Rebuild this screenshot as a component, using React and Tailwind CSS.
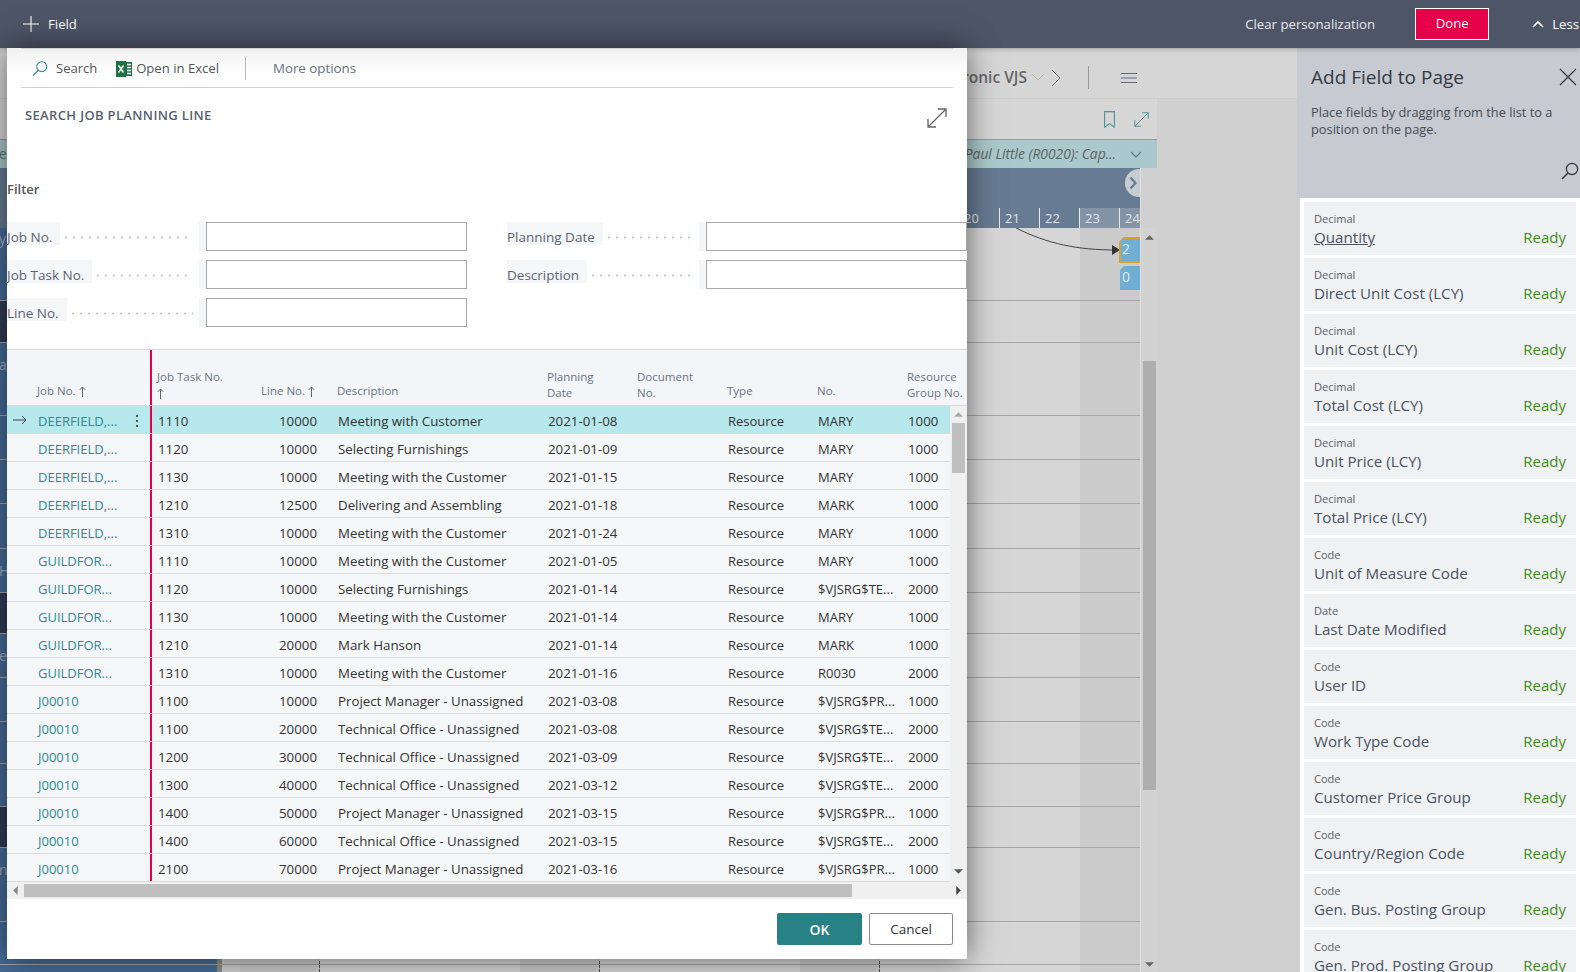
import React from 'react';

const rowsBg = [
  [73, 'blue', 'y'], [42, 'dark', ''], [73, 'blue', 'a'], [44, 'blue', ''], [44, 'blue', ''],
  [45, 'blue', ''], [44, 'blue', 'H\''], [41, 'dark', ''], [44, 'blue', 'e'], [44, 'blue', ''],
  [42, 'blue', ''], [43, 'blue', ''], [41, 'dark', ''], [74, 'blue', 'na'], [43, 'blue', ''], [12, 'blue', ''],
];

const PM = 'Project Manager - Unassigned';
const TO = 'Technical Office - Unassigned';
const MC = 'Meeting with the Customer';
const SF = 'Selecting Furnishings';
const TE = '$VJSRG$TE...';
const PR = '$VJSRG$PR...';
const D = 'DEERFIELD,...';
const G = 'GUILDFOR...';
const J = 'J00010';
const data = [
  [D, '1110', '10000', 'Meeting with Customer', '2021-01-08', 'MARY', '1000'],
  [D, '1120', '10000', SF, '2021-01-09', 'MARY', '1000'],
  [D, '1130', '10000', MC, '2021-01-15', 'MARY', '1000'],
  [D, '1210', '12500', 'Delivering and Assembling', '2021-01-18', 'MARK', '1000'],
  [D, '1310', '10000', MC, '2021-01-24', 'MARY', '1000'],
  [G, '1110', '10000', MC, '2021-01-05', 'MARY', '1000'],
  [G, '1120', '10000', SF, '2021-01-14', TE, '2000'],
  [G, '1130', '10000', MC, '2021-01-14', 'MARY', '1000'],
  [G, '1210', '20000', 'Mark Hanson', '2021-01-14', 'MARK', '1000'],
  [G, '1310', '10000', MC, '2021-01-16', 'R0030', '2000'],
  [J, '1100', '10000', PM, '2021-03-08', PR, '1000'],
  [J, '1100', '20000', TO, '2021-03-08', TE, '2000'],
  [J, '1200', '30000', TO, '2021-03-09', TE, '2000'],
  [J, '1300', '40000', TO, '2021-03-12', TE, '2000'],
  [J, '1400', '50000', PM, '2021-03-15', PR, '1000'],
  [J, '1400', '60000', TO, '2021-03-15', TE, '2000'],
  [J, '2100', '70000', PM, '2021-03-16', PR, '1000'],
];

const fields = [
  ['Decimal', 'Quantity'], ['Decimal', 'Direct Unit Cost (LCY)'], ['Decimal', 'Unit Cost (LCY)'],
  ['Decimal', 'Total Cost (LCY)'], ['Decimal', 'Unit Price (LCY)'], ['Decimal', 'Total Price (LCY)'],
  ['Code', 'Unit of Measure Code'], ['Date', 'Last Date Modified'], ['Code', 'User ID'],
  ['Code', 'Work Type Code'], ['Code', 'Customer Price Group'], ['Code', 'Country/Region Code'],
  ['Code', 'Gen. Bus. Posting Group'], ['Code', 'Gen. Prod. Posting Group'],
];

const GRID = 'grid grid-cols-[30px_113px_2px_100px_65px_225px_90px_90px_90px_90px_48px]';

function Expand({ className, color = 'currentColor', w = 1.4 }) {
  return (
    <svg viewBox="0 0 20 20" className={className} fill="none" stroke={color} strokeWidth={w}>
      <path d="M1 19 19 1M11 1h8v8M1 11v8h8" />
    </svg>
  );
}

function SearchIcon({ className, color }) {
  return (
    <svg viewBox="0 0 18 18" className={className} fill="none" stroke={color} strokeWidth="1.2">
      <circle cx="11" cy="7" r="5.6" />
      <path d="M7 11 1 17" strokeWidth="1.4" />
    </svg>
  );
}

function Tri({ dir, className }) {
  const p = { up: '0,6 4,2 8,6', down: '0,2 8,2 4,6', left: '6,0 6,8 2,4', right: '2,0 2,8 6,4' }[dir];
  return (
    <svg viewBox="0 0 8 8" className={className} fill="currentColor">
      <polygon points={p} />
    </svg>
  );
}

function Up({ className = '' }) {
  return (
    <svg viewBox="0 0 7 11" className={`inline-block w-[7px] h-[11px] ${className}`} fill="none" stroke="#5f6773" strokeWidth="1">
      <path d="M3.5 11V1M.8 3.8 3.5 1l2.7 2.8" />
    </svg>
  );
}

function Field({ label }) {
  return (
    <div className="flex h-[29px] w-[460px]">
      <div className="flex w-[192px] h-[23px] items-center">
        <span className="bg-[#f5f6f8] h-[23px] pr-[8px] leading-[31px] text-[13.5px] text-[#5c6470] whitespace-nowrap">{label}</span>
        <span className="flex-1 ml-[2px] mr-[6px] mt-[8px] h-[3px] bg-[radial-gradient(circle,#c4c8cc_1px,transparent_1.2px)] bg-[length:8px_3px] bg-repeat-x" />
      </div>
      <div className="w-[7px] bg-[#f5f6f8] h-full" />
      <div className="flex-1 border border-[#a8a8a8] bg-white" />
    </div>
  );
}

function Timeline() {
  return (
    <div className="flex-1 flex">
      <div className="w-[18px] bg-[#d0d0d0]" />
      <div className="w-[80px] bg-[#cbcbcb] border-r border-dashed border-[#555]" />
      <div className="w-[200px] bg-[#d6d6d6]" />
      <div className="w-[80px] bg-[#cbcbcb] border-r border-dashed border-[#555]" />
      <div className="w-[200px] bg-[#d6d6d6]" />
      <div className="w-[80px] bg-[#cbcbcb] border-r border-dashed border-[#555]" />
      <div className="w-[200px] bg-[#d6d6d6]" />
      <div className="w-[60px] bg-[#cbcbcb]" />
    </div>
  );
}

export default function App() {
  return (
    <div className="relative w-[1580px] h-[972px] overflow-hidden flex flex-col bg-[#d0d0d0] font-['Open_Sans',sans-serif] text-[13px] text-[#333]">
      {/* top bar */}
      <div className="relative z-10 h-[48px] shrink-0 bg-[#4d5567] text-white flex items-center shadow-[0_1px_5px_rgba(0,0,0,0.25)]">
        <svg viewBox="0 0 16 16" className="w-[16px] h-[16px] ml-[23px]" fill="none" stroke="white" strokeWidth="1.1">
          <path d="M8 0v16M0 8h16" />
        </svg>
        <span className="ml-[9px] text-[13.2px] leading-[50px]">Field</span>
        <span className="ml-auto text-[13.2px] leading-[50px] text-[#e6e8ec]">Clear personalization</span>
        <button className="ml-[40px] w-[74px] h-[32px] bg-[#e4004b] border border-white text-[13.2px] text-white">Done</button>
        <svg viewBox="0 0 12 8" className="w-[12px] h-[8px] ml-[43px]" fill="none" stroke="white" strokeWidth="1.6">
          <path d="M1 7l5-5 5 5" />
        </svg>
        <span className="ml-[8px] mr-[1px] text-[13.2px] leading-[50px]">Less</span>
      </div>

      <div className="flex-1 flex min-h-0">
        {/* background page */}
        <div className="w-[1297px] flex flex-col">
          <div className="h-[51px] shrink-0 bg-[#d6d6d6] border-b border-[#cdcdcd] flex items-center justify-end pr-[160px] pt-[9px] text-[#666]">
            <span className="text-[15.5px] font-semibold">ronic VJS</span>
            <svg viewBox="0 0 12 7" className="w-[12px] h-[7px] ml-[5px]" fill="none" stroke="#b4b4b4" strokeWidth="1"><path d="M0 0l6 6 6-6" /></svg>
            <svg viewBox="0 0 10 18" className="w-[10px] h-[18px] ml-[7px]" fill="none" stroke="#777" strokeWidth="1"><path d="M1 1l8 8-8 8" /></svg>
            <div className="w-px h-[23px] bg-[#999] ml-[27px]" />
            <svg viewBox="0 0 16 10" className="w-[16px] h-[10px] ml-[32px]" fill="none" stroke="#5f6b7a" strokeWidth="1"><path d="M0 .5h16M0 5h16M0 9.5h16" /></svg>
          </div>
          <div className="flex-1 flex min-h-0">
            <div className="w-[1157px] flex flex-col">
              <div className="h-[40px] shrink-0 bg-[#d6d6d6] flex items-center justify-end pr-[8px]">
                <svg viewBox="0 0 11 17" className="w-[11px] h-[17px] mr-[19px]" fill="none" stroke="#4f9298" strokeWidth="1.1"><path d="M.6.6h9.8v15.6L5.5 12.6.6 16.2z" /></svg>
                <Expand className="w-[15px] h-[15px]" color="#4f9298" w={1.3} />
              </div>
              <div className="h-[29px] shrink-0 bg-[#abc9cc] border-t border-[#999] flex items-center justify-end pr-[15px] italic text-[#5a6466] text-[13.8px]">
                <span className="mr-auto -ml-[1px] not-italic text-[#5f7476]">e</span>
                <span>Paul Little (R0020): Cap...</span>
                <svg viewBox="0 0 12 7" className="w-[12px] h-[7px] ml-[14px]" fill="none" stroke="#4f8388" strokeWidth="1.2"><path d="M1 1l5 5 5-5" /></svg>
              </div>
              <div className="flex-1 flex min-h-0">
                <div className="flex-1 flex flex-col min-w-0">
                  <div className="h-[60px] shrink-0 bg-[#677b92] flex flex-col">
                    <div className="h-[40px] flex justify-end pt-[1px]">
                      <div className="w-[15px] h-[28px] bg-[#c7ccd2] rounded-l-full flex items-center justify-center text-[#677b92]">
                        <svg viewBox="0 0 8 14" className="w-[8px] h-[14px]" fill="none" stroke="currentColor" strokeWidth="2.2"><path d="M1.5 1.5 6.5 7l-5 5.5" /></svg>
                      </div>
                    </div>
                    <div className="h-[20px] flex justify-end text-[13px] leading-[20px] text-[#e0e4e8] overflow-hidden">
                      {['20', '21', '22', '23', '24'].map((d, i) => (
                        <div key={d} className={`${i === 4 ? 'w-[21px]' : 'w-[40px]'} ${i > 2 ? 'bg-[#8494a6]' : ''} ${i > 0 ? 'border-l border-[#e8ebee]' : ''} pl-[5px] whitespace-nowrap`}>{d}</div>
                      ))}
                    </div>
                  </div>
                  <div className="flex-1 relative overflow-hidden flex flex-col">
                    {rowsBg.map(([h, kind, txt], i) => (
                      <div key={i} style={{ height: h }} className="shrink-0 flex border-b border-[#a6a6a6]">
                        <div className={`w-[217px] overflow-hidden ${kind === 'dark' ? 'bg-[#303c56]' : 'bg-[#466b98]'} text-[#9fb0c4] text-[14px]`}>
                          {txt && <span className={`block -ml-[1px] ${i === 0 ? 'mt-0' : 'mt-[11px]'}`}>{txt}</span>}
                        </div>
                        <div className="w-[5px] bg-[#8f8f8f]" />
                        <Timeline />
                      </div>
                    ))}
                    <svg viewBox="0 0 120 30" className="absolute left-[1008px] top-0 w-[120px] h-[30px]" fill="none">
                      <path d="M8 0C40 16 70 22 108 22" stroke="#444" strokeWidth="1" />
                      <path d="M104 17l8 5-8 5z" fill="#333" />
                    </svg>
                    <div className="absolute left-[1119px] top-[9px] w-[21px] h-[26px] bg-[#6fafd4] border-2 border-r-0 border-[#d9a035] [clip-path:polygon(5px_0,100%_0,100%_100%,0_100%,0_5px)] text-[#dfeaf2] text-[14px] leading-[20px] pl-[1px]">2</div>
                    <div className="absolute left-[1120px] top-[38px] w-[20px] h-[24px] bg-[#6fafd4] [clip-path:polygon(4px_0,100%_0,100%_100%,0_100%,0_4px)] text-[#dfeaf2] text-[14px] leading-[22px] pl-[2px]">0</div>
                  </div>
                </div>
                <div className="w-[17px] shrink-0 flex flex-col items-center bg-[#d2d2d2] border-l border-[#e0e0e0]">
                  <div className="h-[60px] w-full bg-[#d0d0d0]" />
                  <Tri dir="up" className="w-[9px] h-[9px] mt-[5px] text-[#666]" />
                  <div className="w-[13px] h-[429px] bg-[#aeaeae] mt-[119px]" />
                  <Tri dir="down" className="w-[9px] h-[9px] mt-auto mb-[3px] text-[#666]" />
                </div>
              </div>
            </div>
            <div className="flex-1 bg-[#d0d0d0]" />
          </div>
        </div>

        {/* right panel */}
        <div className="w-[283px] flex flex-col bg-[#cfcfcf]">
          <div className="h-[150px] shrink-0 bg-[#c7cad0] pl-[14px] relative">
            <div className="pt-[15px] text-[19px] leading-[28px] text-[#333a45]">Add Field to Page</div>
            <div className="mt-[13px] w-[264px] text-[12.8px] leading-[17px] text-[#444b56]">Place fields by dragging from the list to a position on the page.</div>
            <svg viewBox="0 0 18 18" className="absolute right-[3px] top-[20px] w-[18px] h-[18px]" fill="none" stroke="#333" strokeWidth="1.1"><path d="M1 1l16 16M17 1 1 17" /></svg>
            <SearchIcon className="absolute right-[1px] top-[114px] w-[18px] h-[18px]" color="#333" />
          </div>
          <div className="flex-1 min-h-0 ml-[3px] bg-white overflow-hidden pl-[4px] pr-[4px] pt-[4px] flex flex-col gap-[3px]">
            {fields.map(([t, n], i) => (
              <div key={n} className="h-[53px] shrink-0 bg-[#eff1f3] pl-[10px] pr-[10px] pt-[9px]">
                <div className="text-[11px] leading-[15px] text-[#5a5f66]">{t}</div>
                <div className="flex justify-between items-baseline mt-[1px] text-[15.15px] leading-[21px]">
                  <span className={`text-[#4b5260] ${i === 0 ? 'underline' : ''}`}>{n}</span>
                  <span className="text-[#3f8a1f] text-[15px]">Ready</span>
                </div>
              </div>
            ))}
          </div>
        </div>
      </div>

      {/* modal */}
      <div className="absolute left-[7px] top-[48px] w-[960px] h-[911px] bg-white z-20 flex flex-col shadow-[0_0_28px_rgba(0,0,0,0.55)]">
        <div className="h-[40px] shrink-0 bg-gradient-to-b from-[#f0f0f0] to-white to-60%">
          <div className="mx-[14px] h-full border-b border-[#d4d4d4] border-t border-t-[#d4d4d4] flex items-center pl-[11px] pt-[1px]">
            <SearchIcon className="w-[16px] h-[17px]" color="#2b8a92" />
            <span className="ml-[8px] text-[#555]">Search</span>
            <svg viewBox="0 0 16 16" className="w-[16px] h-[16px] ml-[19px]">
              <rect x="8" y="1" width="8" height="14" fill="#1e7145" />
              <path d="M11 3.5h4M11 6.5h4M11 9.5h4M11 12.5h4" stroke="#fff" strokeWidth="1.4" />
              <rect x="0" y="0" width="10" height="16" fill="#1e7145" />
              <path d="M2.5 4.5l5 7M7.5 4.5l-5 7" stroke="#fff" strokeWidth="1.5" />
            </svg>
            <span className="ml-[4px] text-[13.1px] text-[#555]">Open in Excel</span>
            <div className="w-px h-[23px] bg-[#b8b8b8] ml-[26px]" />
            <span className="ml-[27px] text-[13.3px] text-[#6b7280]">More options</span>
          </div>
        </div>
        <div className="h-[40px] shrink-0 flex justify-between pl-[18px] pr-[20px] pt-[19px]">
          <span className="text-[13px] leading-[16px] font-semibold text-[#57606e] tracking-[0.35px]">SEARCH JOB PLANNING LINE</span>
          <Expand className="w-[20px] h-[20px] mt-[1px]" color="#666" w={1.3} />
        </div>
        <div className="mt-[51px] text-[13px] leading-[20px] font-semibold text-[#555]">Filter</div>
        <div className="mt-[23px] flex gap-[40px] h-[105px]">
          <div className="flex flex-col gap-[9px]">
            <Field label="Job No." />
            <Field label="Job Task No." />
            <Field label="Line No." />
          </div>
          <div className="flex flex-col gap-[9px]">
            <Field label="Planning Date" />
            <Field label="Description" />
          </div>
        </div>

        {/* table */}
        <div className="mt-[22px] h-[550px] shrink-0 flex flex-col border-t border-[#d8d8d8]">
          <div className={`${GRID} h-[56px] shrink-0 bg-[#f4f5f8] text-[11.5px] leading-[16px] text-[#6b7280] border-b border-[#dcdcdc]`}>
            <div />
            <div className="self-end pb-[6px] flex items-center gap-[3px]">Job No. <Up /></div>
            <div className="bg-[#e4004b]" />
            <div className="self-end pb-[4px] pl-[5px]">Job Task No.<br /><Up /></div>
            <div className="self-end pb-[6px] pr-[2px] whitespace-nowrap flex items-center justify-end gap-[3px]">Line No. <Up /></div>
            <div className="self-end pb-[6px] pl-[20px]">Description</div>
            <div className="self-end pb-[4px] pl-[5px]">Planning<br />Date</div>
            <div className="self-end pb-[4px] pl-[5px]">Document<br />No.</div>
            <div className="self-end pb-[6px] pl-[5px]">Type</div>
            <div className="self-end pb-[6px] pl-[5px]">No.</div>
            <div className="self-end pb-[4px] pl-[5px] whitespace-nowrap">Resource<br />Group No.</div>
          </div>
          <div className="flex h-[476px] shrink-0">
            <div className="w-[943px] shrink-0 flex flex-col">
              {data.map((r, i) => (
                <div key={i} className={`${GRID} h-[28px] shrink-0 items-stretch leading-[24px] text-[13.3px] border-b border-[#dcdcdc] ${i === 0 ? 'bg-[#b6e8ec]' : 'bg-[#f5f6f8]'}`}>
                  <div className="pl-[6px] flex items-center pt-[1px]">
                    {i === 0 && (
                      <svg viewBox="0 0 14 10" className="w-[14px] h-[10px]" fill="none" stroke="#3c4654" strokeWidth="1"><path d="M0 5h13M9 1l4 4-4 4" /></svg>
                    )}
                  </div>
                  <div className="pl-[1px] pt-[3px] flex justify-between items-center text-[13px] text-[#2b8a92] pr-[11px]">
                    <span>{r[0]}</span>
                    {i === 0 && (
                      <svg viewBox="0 0 4 14" className="w-[4px] h-[14px]" fill="#333"><circle cx="2" cy="2" r="1.1" /><circle cx="2" cy="7" r="1.1" /><circle cx="2" cy="12" r="1.1" /></svg>
                    )}
                  </div>
                  <div className="bg-[#e4004b]" />
                  <div className="pl-[6px] pt-[3px]">{r[1]}</div>
                  <div className="text-right pt-[3px]">{r[2]}</div>
                  <div className="pl-[21px] pt-[3px] whitespace-nowrap">{r[3]}</div>
                  <div className="pl-[6px] pt-[3px]">{r[4]}</div>
                  <div />
                  <div className="pl-[6px] pt-[3px] text-[13px]">Resource</div>
                  <div className="pl-[6px] pt-[3px] text-[13px] whitespace-nowrap">{r[5]}</div>
                  <div className="pl-[6px] pt-[3px]">{r[6]}</div>
                </div>
              ))}
            </div>
            <div className="flex-1 bg-[#f0f0f0] flex flex-col items-center text-[#a8a8a8]">
              <div className="h-[17px] flex items-center"><Tri dir="up" className="w-[9px] h-[9px]" /></div>
              <div className="w-[13px] h-[50px] bg-[#bfbfbf]" />
              <div className="mt-auto mb-[2px] h-[17px] flex items-center text-[#555]"><Tri dir="down" className="w-[9px] h-[9px]" /></div>
            </div>
          </div>
          <div className="h-[17px] shrink-0 bg-[#f0f0f0] flex items-center">
            <div className="w-[17px] flex justify-center text-[#888]"><Tri dir="left" className="w-[9px] h-[9px]" /></div>
            <div className="w-[828px] h-[13px] bg-[#bfbfbf]" />
            <div className="ml-auto w-[17px] flex justify-center text-[#444]"><Tri dir="right" className="w-[9px] h-[9px]" /></div>
          </div>
        </div>

        {/* footer */}
        <div className="flex-1 flex justify-end items-start gap-[7px] pt-[14px] pr-[14px]">
          <button className="w-[85px] h-[32px] bg-[#288285] rounded-[2px] text-white font-semibold text-[14px]">OK</button>
          <button className="w-[84px] h-[32px] bg-white border border-[#8a8a8a] rounded-[2px] text-[#333] text-[13.5px]">Cancel</button>
        </div>
      </div>
    </div>
  );
}
